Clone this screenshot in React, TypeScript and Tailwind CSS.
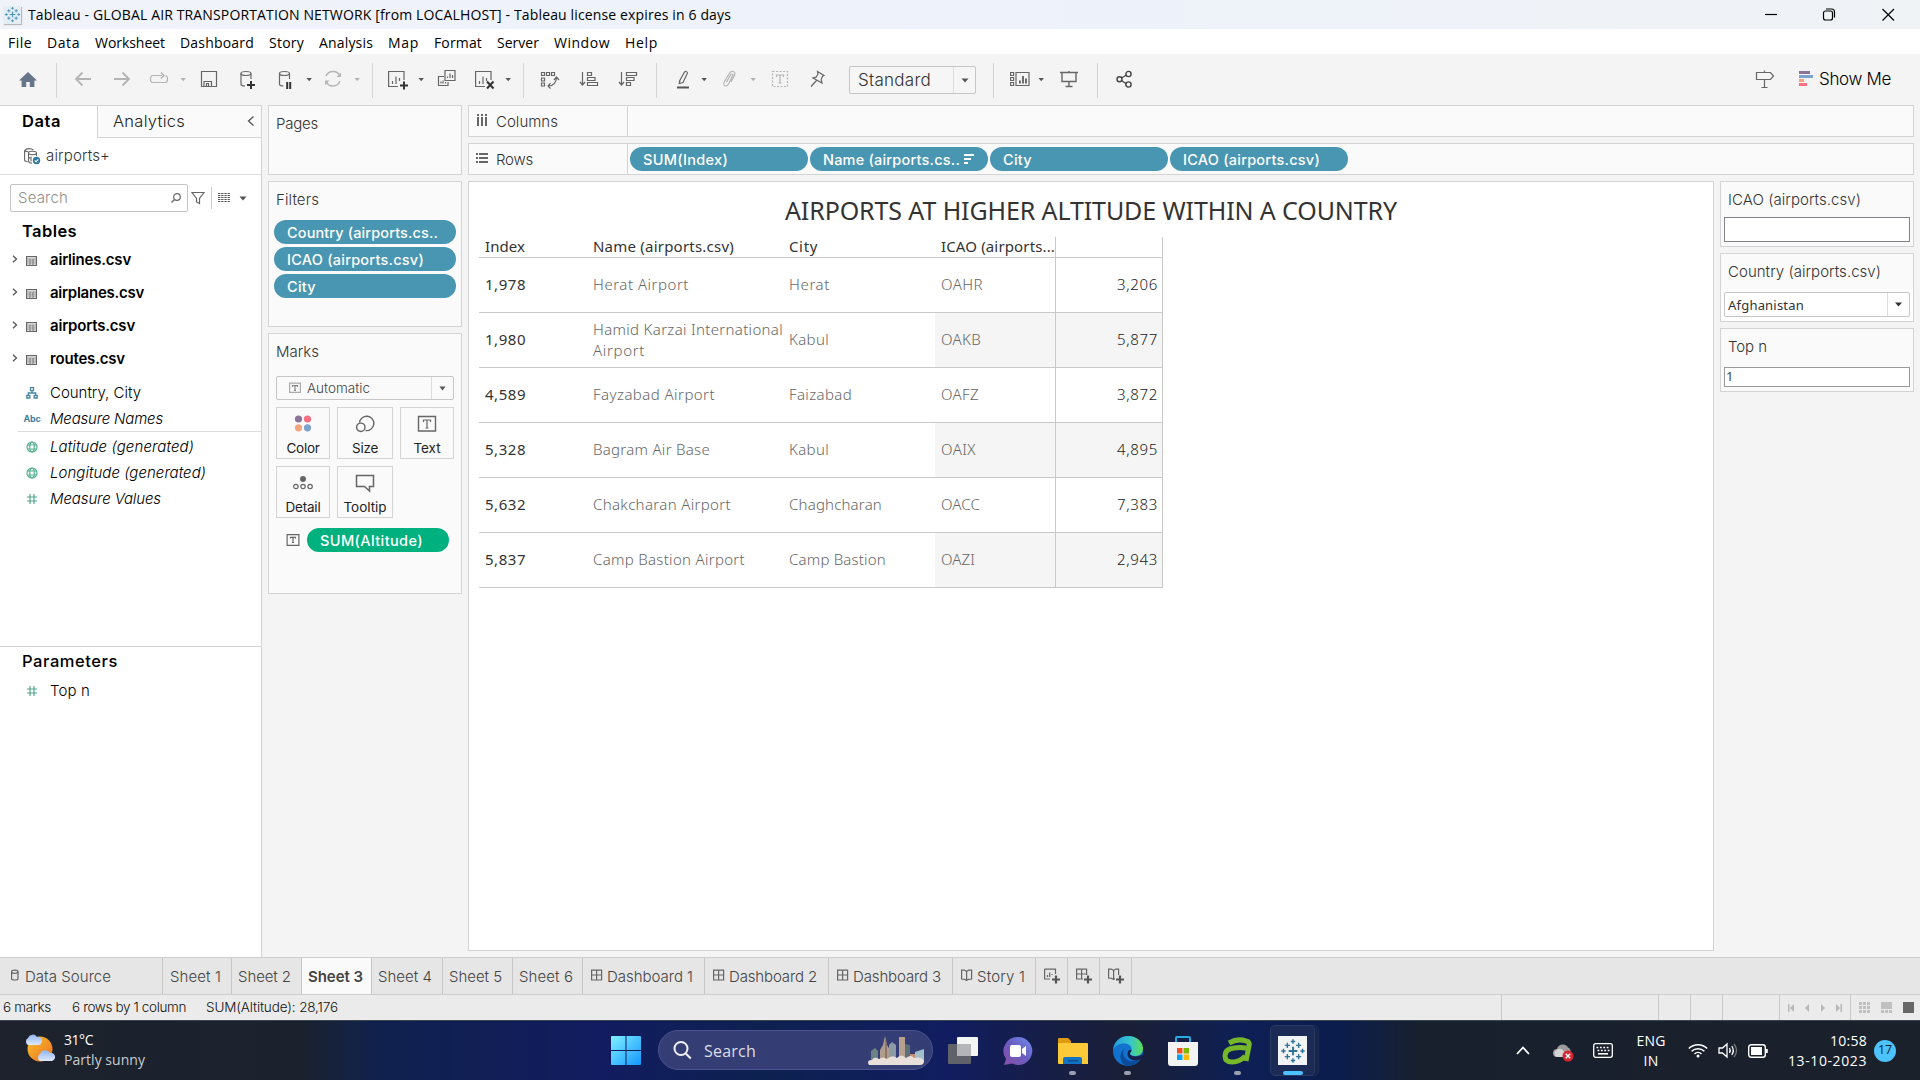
import React, { useLayoutEffect, useRef, useState } from "react";

const UI = "font-[Inter,sans-serif]";
const SYS = "font-['Open_Sans',sans-serif]";

/* A single line of text whose letters are spread evenly over `w` pixels. */
function T({ w, c = "", children }: { w: number; c?: string; children: string }) {
  const ref = useRef<HTMLSpanElement>(null);
  const [gap, setGap] = useState<number | null>(null);
  useLayoutEffect(() => {
    const el = ref.current;
    if (el && gap === null) {
      setGap((w + 1 - el.getBoundingClientRect().width) / children.length);
    }
  }, [gap, w, children]);
  return (
    <span ref={ref} className={`inline-block shrink-0 whitespace-pre ${c}`} style={{ letterSpacing: gap ?? 0 }}>
      {children}
    </span>
  );
}

type IconProps = { c?: string; children: React.ReactNode; w?: number; h?: number };
function Icon({ c = "", children, w = 20, h = 20 }: IconProps) {
  return (
    <svg width={w} height={h} viewBox={`0 0 ${w} ${h}`} fill="none" stroke="#666" strokeWidth="1.2" className={`shrink-0 ${c}`}>
      {children}
    </svg>
  );
}

function Tri({ c = "", light = false }: { c?: string; light?: boolean }) {
  return (
    <svg width="8" height="20" viewBox="0 0 8 20" className={`shrink-0 ${c}`}>
      <path d="M1.5 8h5.4L4.2 11.2z" fill={light ? "#b4b4b4" : "#555"} />
    </svg>
  );
}

function Sep({ c = "" }: { c?: string }) {
  return <div className={`-mt-[7px] h-[35px] w-px shrink-0 bg-[#d4d4d4] ${c}`} />;
}

const plus = <path d="M12 15.5h8M16 11.5v8" stroke="#333" strokeWidth="2" />;

function Toolbar() {
  return (
    <div className="flex h-[51px] items-start bg-[#f4f4f4] pt-4">
      <Icon c="ml-[18px]">
        <path d="M10 2 1 10.5h2.6V17h4.6v-5h3.6v5h4.6v-6.500H19z" fill="#66758a" stroke="none" />
      </Icon>
      <Sep c="ml-[18px]" />
      <Icon c="ml-4"><path d="M18 9H3M9.500 2.500 3 9l6.500 6.500" stroke="#b4b4b4" strokeWidth="1.800" /></Icon>
      <Icon c="ml-[19px]"><path d="M2 9h15M10.500 2.500 17 9l-6.500 6.500" stroke="#b4b4b4" strokeWidth="1.800" /></Icon>
      <Icon c="ml-[17px]">
        <path d="M13 5.500H4Q1.500 5.500 1.500 9T4 12.500h12.500Q18.500 12.500 18.500 9T16.500 6" stroke="#b4b4b4" />
        <path d="m12 2.500 3 3-3 3" stroke="#b4b4b4" strokeWidth="1.500" />
      </Icon>
      <Tri c="ml-[10px]" light />
      <Icon c="ml-3">
        <path d="M2.500 1.500h15v15h-15zM5 16.500v-5h7.500v5M7.500 16.500v-3h2v3" />
      </Icon>
      <Icon c="ml-[19px]">
        <ellipse cx="8" cy="3.500" rx="5" ry="2" /><path d="M3 3.500v10.500q0 2 4 2M13 3.500V9" />
        <path d="M9 15h8M13 11v8" stroke="#333" strokeWidth="2" />
      </Icon>
      <Icon c="ml-[18px]">
        <ellipse cx="8.500" cy="3.500" rx="5" ry="2" /><path d="M3.500 3.500v10.500q0 2 4 2M13.500 3.500V9" />
        <path d="M11.200 12v7M14.200 12v7" stroke="#333" strokeWidth="2" />
      </Icon>
      <Tri c="ml-[9px]" />
      <Icon c="ml-[10px]">
        <path d="M3 6Q5 1.500 10 1.500T16.500 5.500M17 11q-2 5-7 5T3.500 12" stroke="#b4b4b4" strokeWidth="1.400" />
        <path d="M18 2.500V7h-4.500zM2 15v-4.500h4.500z" fill="#b4b4b4" stroke="none" />
      </Icon>
      <Tri c="ml-[10px]" light />
      <Sep c="ml-[11px]" />
      <Icon c="ml-[15px]">
        <path d="M10 16.500H.600V1.500h15.400V10M4.500 14v-3M8 14V6.500M11.500 11V8" />
        {plus}
      </Icon>
      <Tri c="ml-[9px]" />
      <Icon c="ml-3">
        <path d="M8 .500h10v10H8zM7 6.500H1.500v9h9.500V12M10.500 8V6.500M13 8V3.500M15.500 8V5M4 13.500v-2M6 13.500v-3M8.500 13.500v-1.500" />
      </Icon>
      <Icon c="ml-[18px]">
        <path d="M10 16.500H.600V1.500h15.400V10M4.500 14v-3M8 14V6.500M11.500 11V8" />
        <path d="m12 11.500 6.500 7M18.500 11.500l-6.500 7" stroke="#333" strokeWidth="2" />
      </Icon>
      <Tri c="ml-[9px]" />
      <Sep c="ml-[11px]" />
      <Icon c="ml-4">
        <path d="M1.500 2.500h3v3h-3zM6.500 2.500h3v3h-3zM11.500 2.500h3v3h-3zM1.500 8h3v3h-3zM1.500 13h3v3h-3z" />
        <path d="M8 16q8 0 8.500-8.500M10.500 13.200 8 16l2.500 2.500M14 10l2.500-3 2.500 3" />
      </Icon>
      <Icon c="ml-[19px]">
        <path d="M3.500 2v12M1 12l2.500 3L6 12M8.500 2.500h4v3h-4zM8.500 7.500H16v3H8.500zM8.500 12.500h10v3h-10z" />
      </Icon>
      <Icon c="ml-[19px]">
        <path d="M3.500 2v12M1 12l2.500 3L6 12M8.500 2.500h10v3h-10zM8.500 7.500H16v3H8.500zM8.500 12.500h4v3h-4z" />
      </Icon>
      <Sep c="ml-[18px]" />
      <Icon c="ml-4">
        <path d="m6.500 11 5-9q2-1.500 3 1l-4.500 9.500-3.500 1zM6 14l1-3.500" />
        <path d="M4 17.500h12" stroke="#555" strokeWidth="2" />
      </Icon>
      <Tri c="ml-[7px]" />
      <Icon c="ml-[11px]">
        <path d="m7.500 12 4-7q1.500-2 2.500 0l-4.500 9q-2.500 3.500-4.500 1-.8-1.500.5-3.500L11 2.500q2.500-2.500 4.500 0 .8 1.500 0 3L12 12" stroke="#b4b4b4" />
      </Icon>
      <Tri c="ml-[10px]" light />
      <Icon c="ml-[13px]">
        <path d="M2.500 1.500h15v15h-15z" stroke="#b4b4b4" strokeDasharray="2 1.500" />
        <path d="M6.500 7V5h7v2M10 5v8M8.500 13h3" stroke="#b4b4b4" />
      </Icon>
      <Icon c="ml-[18px]">
        <path d="m9.500 1.500 6.500 4-1.500.8-1.300 3.200.8 3.500L5 8l3-.8 2-3.200zM8.500 10.500 3 16.500" />
      </Icon>
      <div className={`-mt-1 ml-[21px] flex h-[28px] w-[127px] shrink-0 items-center rounded-[2px] border border-[#c6c6c6] bg-[#f6f6f6] ${UI}`}>
        <div className="flex w-[103px] pl-2 pt-px"><T w={72} c="text-[17px] font-light text-[#333]">Standard</T></div>
        <div className="flex h-full items-center border-l border-[#ddd] pl-[7px]">
          <svg width="8" height="5"><path d="M.500.500h7L4 4.500z" fill="#555" /></svg>
        </div>
      </div>
      <Sep c="ml-[17px]" />
      <Icon c="ml-4">
        <path d="M.600 2.500h3v3h-3zM.600 7.500h3v3h-3zM.600 12.500h3v3h-3zM6 2.500h13v13H6z" />
        <path d="M10 13.500v-3M13 13.500V6M16 13.500V8.500" strokeWidth="1.900" />
      </Icon>
      <Tri c="ml-[7px]" />
      <Icon c="ml-[14px]">
        <path d="M1 2.500h18M3 2.500v9h14v-9M10 11.500v5M6.500 16.500h7M10 1v1" strokeWidth="1.400" />
      </Icon>
      <Sep c="ml-[18px]" />
      <Icon c="ml-[17px]">
        <path d="m6.500 8 5-3M6.500 10.500l5 3.500" stroke="#444" />
        <g stroke="#444" strokeWidth="1.400"><circle cx="4.500" cy="9.200" r="2.500" /><circle cx="13.500" cy="4" r="2.600" /><circle cx="13.500" cy="14.500" r="2.600" /></g>
      </Icon>
      <Icon c="ml-auto">
        <path d="M1.500 2.500h14L18.500 6l-3 3.500h-14zM9.500.500v2M9.500 9.500v8M6.500 17.500h6" />
      </Icon>
      <Icon c="ml-6" w={14}>
        <g stroke="none"><path d="M0 1h11v3H0z" fill="#8c7399" /><path d="M0 5h14v3H0z" fill="#7ea2cc" /><path d="M0 9h5v3H0z" fill="#f2a57c" /><path d="M0 13h8v3H0z" fill="#fa6f82" /></g>
      </Icon>
      <div className={`-mt-[7px] ml-1.5 flex h-[34px] w-[101px] shrink-0 items-center ${UI}`}>
        <T w={71} c="text-[17px] font-light text-black">Show Me</T>
      </div>
    </div>
  );
}

function TableauMark({ s, color = "#2f7396" }: { s: number; color?: string }) {
  return (
    <svg width={s} height={s} viewBox="0 0 30 30" fill="none" stroke={color} strokeWidth="1.600">
      <path d="M15 10v10M10 15h10" strokeWidth="2.200" />
      <path d="M15 1.500v5M12.500 4h5M15 23.500v5M12.500 26h5M4 12.500v5M1.500 15h5M26 12.500v5M23.500 15h5" />
      <path d="M8.500 5.500v6M5.500 8.500h6M21.500 5.500v6M18.500 8.500h6M8.500 18.500v6M5.500 21.500h6M21.500 18.500v6M18.500 21.500h6" />
    </svg>
  );
}

function TitleBar() {
  return (
    <div className="flex h-[29px] items-center bg-linear-to-r from-[#f1f3fa] via-[#edf2fb] to-[#eff3f6] pl-[3px]">
      <div className="mr-[7px] flex size-[18px] items-center justify-center bg-[#e4eef4] shadow-[1px_1px_1px_#bbb]">
        <TableauMark s={17} color="#4a93bb" />
      </div>
      <T w={702} c={`text-[14px] text-black ${SYS}`}>Tableau - GLOBAL AIR TRANSPORTATION NETWORK [from LOCALHOST] - Tableau license expires in 6 days</T>
      <svg width="140" height="20" viewBox="0 0 140 20" className="ml-auto mr-[21px]" fill="none" stroke="#000" strokeWidth="1.200">
        <path d="M6 9.500h12" />
        <rect x="64.500" y="6" width="9" height="9" rx="2" />
        <path d="M67 4h5.500q3 0 3 3v5.500" />
        <path d="m123.500 4 11.500 11.500M135 4l-11.500 11.500" />
      </svg>
    </div>
  );
}

const menus: [string, number][] = [
  ["File", 23], ["Data", 32], ["Worksheet", 69], ["Dashboard", 73], ["Story", 34], ["Analysis", 53],
  ["Map", 30], ["Format", 47], ["Server", 41], ["Window", 55], ["Help", 32],
];

function Glyph({ kind }: { kind: string }) {
  if (kind === "geo")
    return <Icon w={12} h={12}><g stroke="#54b18d"><circle cx="6" cy="6" r="5" /><ellipse cx="6" cy="6" rx="2.300" ry="5" /><path d="M1.500 4h9M1.500 8h9" /></g></Icon>;
  if (kind === "hash")
    return <Icon w={12} h={12}><path d="M4 1v10M8 1v10M1 4h10M1 8h10" stroke="#54a88a" /></Icon>;
  if (kind === "tree")
    return <Icon w={12} h={12}><path d="M4.500.600h3v3h-3zM.800 8.500h3v2.500h-3zM8.200 8.500h3v2.500h-3zM6 3.600V6M2.300 8.500V6h7.400v2.500" stroke="#4a86a3" strokeWidth="1.300" /></Icon>;
  return <T w={16} c="text-[9px] font-bold text-[#4580a0]">Abc</T>;
}

function Field({ kind, w, italic, children, c = "" }: { kind: string; w: number; italic?: boolean; children: string; c?: string }) {
  return (
    <div className={`flex h-[26px] shrink-0 items-center ${c}`}>
      <div className="flex w-[50px] shrink-0 justify-center pl-[14px]"><Glyph kind={kind} /></div>
      <T w={w} c={italic ? "text-[15px] font-light italic text-black" : "text-[15px] font-light text-black"}>{children}</T>
    </div>
  );
}

const tables: [string, number][] = [["airlines.csv", 80], ["airplanes.csv", 93], ["airports.csv", 84], ["routes.csv", 74]];

function DataPane() {
  return (
    <div className={`flex w-[262px] shrink-0 flex-col border-r border-t border-[#d4d4d4] bg-white ${UI}`}>
      <div className="flex h-8 shrink-0">
        <div className="flex w-[97px] items-center pb-[2px] pl-[22px]"><T w={38} c="text-[16.500px] font-semibold text-black">Data</T></div>
        <div className="flex flex-1 items-center border-b border-l border-[#d4d4d4] bg-[#fafafa] pl-[15px]">
          <T w={71} c="text-[16.500px] font-light text-[#222]">Analytics</T>
          <svg width="8" height="12" viewBox="0 0 8 12" className="ml-auto mr-[6px] -mt-0.5"><path d="M6.500 1.500 1.500 6l5 4.500" fill="none" stroke="#555" strokeWidth="1.300" /></svg>
        </div>
      </div>
      <div className="flex h-[37px] shrink-0 items-center border-b border-[#e0e0e0] pl-6">
        <svg width="17" height="17" viewBox="0 0 17 17" fill="none" stroke="#666" strokeWidth="1.100">
          <path d="M.600 2.500v9.500q0 1.500 3 1.800M.600 2.500Q2 .600 5 .600t4.500 1.500M.600 2.500Q2 4 4.500 3.800" />
          <ellipse cx="8.500" cy="5" rx="4" ry="1.700" /><path d="M4.500 5v8q0 2 3.500 2.300M12.500 5v3M4.500 9q1 1.500 3 1.500M7 8.500v5" />
          <circle cx="12.500" cy="12.500" r="3.700" fill="#2f7a9f" stroke="none" /><path d="m10.700 12.500 1.300 1.300 2.300-2.500" stroke="#fff" />
        </svg>
        <T w={63} c="ml-[5px] text-[15px] font-light text-[#333]">airports+</T>
      </div>
      <div className="flex h-[46px] shrink-0 items-center pl-[10px]">
        <div className="flex h-7 w-[178px] items-center rounded-[2px] border border-[#c4c4c4] pl-[7px]">
          <T w={49} c="text-[15px] font-light text-[#8f8f8f]">Search</T>
          <Icon w={10} h={10} c="ml-auto mr-[6px]"><circle cx="6" cy="4" r="3.300" /><path d="M3.500 6.500.500 9.500" /></Icon>
        </div>
        <Icon w={14} h={14} c="ml-[3px]"><path d="M1 1.500h12L8.500 7.500v5L5.500 11V7.500z" /></Icon>
        <div className="ml-[6px] h-[22px] w-px bg-[#ccc]" />
        <Icon w={12} h={10} c="ml-[6px]"><path d="M0 .500h12M0 2.500h12M0 4.500h12M0 6.500h12M0 8.500h12" stroke="#555" strokeWidth="1" strokeDasharray="2.300 .9" /></Icon>
        <svg width="8" height="5" className="ml-[9px]"><path d="M.500.500h7L4 4.500z" fill="#555" /></svg>
      </div>
      <div className="mb-[3px] flex h-[20px] shrink-0 items-center pl-[22px]"><T w={54} c="text-[16.500px] font-semibold text-black">Tables</T></div>
      {tables.map(([n, w]) => (
        <div key={n} className="flex h-[33px] shrink-0 items-center pl-[12px]">
          <svg width="6" height="8" viewBox="0 0 6 8" className="-mt-1"><path d="m1 .800 3.500 3.200L1 7.200" fill="none" stroke="#555" strokeWidth="1.300" /></svg>
          <Icon w={11} h={10} c="ml-[8px] mr-[13px]"><path d="M.500.600h10v8.800H.500z" /><path d="M.500 3h10M.500 5h10M.500 7h10M4 3v6M7 3v6" strokeWidth=".8" /></Icon>
          <T w={w} c="text-[15px] font-semibold text-black">{n}</T>
        </div>
      ))}
      <Field kind="tree" w={90} c="mt-1">Country, City</Field>
      <Field kind="abc" w={112} italic>Measure Names</Field>
      <div className="-mt-px ml-[18px] h-px shrink-0 bg-[#dcdcdc]" />
      <Field kind="geo" w={143} italic c="mt-[2px]">Latitude (generated)</Field>
      <Field kind="geo" w={155} italic>Longitude (generated)</Field>
      <Field kind="hash" w={110} italic>Measure Values</Field>
      <div className="mt-auto h-[311px] border-t border-[#d4d4d4] pt-1">
        <div className="flex h-5 items-center pl-[22px]"><T w={95} c="text-[16.500px] font-medium text-black">Parameters</T></div>
        <Field kind="hash" w={39} c="mt-[7px]">Top n</Field>
      </div>
    </div>
  );
}

function Pill({ w, children, c = "", sort = false }: { w: number; children: string; c?: string; sort?: boolean }) {
  return (
    <div className={`flex h-6 shrink-0 items-center rounded-full pl-[13px] pt-px ${c}`}>
      <T w={w} c="text-[14.500px] font-medium text-white">{children}</T>
      {sort && <svg width="11" height="11" className="-mt-px ml-1" fill="#fff"><path d="M0 0h10v2H0zM0 4h7v2H0zM0 8h4v2H0z" /></svg>}
    </div>
  );
}

const label = "text-[15px] font-light text-[#333]";
const card = "border border-[#d4d4d4] bg-[#fafafa]";

function MarkButton({ w, text, c, children }: { w: number; text: string; c: string; children: React.ReactNode }) {
  return (
    <div className={`flex h-[52px] flex-col items-center border border-[#d4d4d4] bg-[#fafafa] pt-[6px] ${c}`}>
      <Icon h={20}>{children}</Icon>
      <div className="mt-1 flex h-5 items-center"><T w={w} c="text-[13.500px] text-[#222]">{text}</T></div>
    </div>
  );
}

function CardColumn() {
  return (
    <div className={`ml-[6px] flex w-[194px] shrink-0 flex-col gap-[6px] ${UI}`}>
      <div className={`h-[70px] pl-[7px] pt-[5px] ${card}`}><div className="flex h-[26px] items-center"><T w={41} c={label}>Pages</T></div></div>
      <div className={`h-[146px] pt-[5px] ${card}`}>
        <div className="flex h-[26px] items-center pl-[7px]"><T w={42} c={label}>Filters</T></div>
        <div className="mt-[7px] flex flex-col gap-[3px] pl-[5px]">
          <Pill w={150} c="w-[182px] bg-[#4996b2]">Country (airports.cs..</Pill>
          <Pill w={136} c="w-[182px] bg-[#4996b2]">ICAO (airports.csv)</Pill>
          <Pill w={28} c="w-[182px] bg-[#4996b2]">City</Pill>
        </div>
      </div>
      <div className={`h-[261px] pl-[7px] pt-[5px] ${card}`}>
        <div className="mb-[11px] flex h-[26px] items-center"><T w={42} c={label}>Marks</T></div>
        <div className="flex h-6 w-[178px] items-center rounded-[2px] border border-[#c6c6c6]">
          <Icon w={12} h={12} c="ml-3"><path d="M.600 1.100h10.800v9.300H.600z" stroke="#aaa" /><path d="M3.500 5V3.600h5V5M6 3.600v4.800M5 8.400h2" stroke="#888" /></Icon>
          <div className="ml-[6px] flex w-[124px]"><T w={62} c="text-[13.500px] font-light text-[#444]">Automatic</T></div>
          <div className="flex h-full items-center border-l border-[#ddd] pl-[7px]"><svg width="7" height="5"><path d="M.500.500h6L3.500 4.500z" fill="#555" /></svg></div>
        </div>
        <div className="mt-[7px] flex gap-[7px]">
          <MarkButton w={32} text="Color" c="w-[54px]">
            <g stroke="none"><circle cx="5.500" cy="5" r="3.600" fill="#8c7399" /><circle cx="14.500" cy="5" r="3.600" fill="#fa6f82" /><circle cx="5.500" cy="13.800" r="3.600" fill="#f2a57c" /><circle cx="14.500" cy="13.800" r="3.600" fill="#7ea2cc" /></g>
          </MarkButton>
          <MarkButton w={25} text="Size" c="w-[56px]"><g strokeWidth="1.400"><path d="M4.500 8.500a7.200 7.200 0 1 1 6 8" /><circle cx="5.800" cy="13.300" r="4.200" /></g></MarkButton>
          <MarkButton w={26} text="Text" c="w-[54px]"><path d="M1.500 2.500h17v14.500h-17z" strokeWidth="1.400" /><path d="M6.500 8V6h7v2M10 6v8M8.500 14h3" /></MarkButton>
        </div>
        <div className="mt-[7px] flex gap-[7px]">
          <MarkButton w={34} text="Detail" c="w-[54px]"><circle cx="10" cy="6" r="3" fill="#666" stroke="none" /><circle cx="2.900" cy="13.500" r="2.200" /><circle cx="10" cy="13.500" r="2.200" /><circle cx="17.100" cy="13.500" r="2.200" /></MarkButton>
          <MarkButton w={42} text="Tooltip" c="w-[56px]"><path d="M1.500 2.500h17v11h-4V18l-5-4.500h-8z" strokeWidth="1.500" /></MarkButton>
        </div>
        <div className="mt-[10px] flex items-center">
          <Icon w={14} h={14} c="ml-[10px]"><path d="M1.100 1.600h11.800v10.800H1.100z" /><path d="M4.500 5.500V4.400h5v1.100M7 4.400v5M6 9.500h2" /></Icon>
          <Pill w={102} c="ml-[7px] w-[142px] bg-[#00b180]">SUM(Altitude)</Pill>
        </div>
      </div>
    </div>
  );
}

const rows: { i: string; n: [string, number][]; city: [string, number]; icao: [string, number]; v: string }[] = [
  { i: "1,978", n: [["Herat Airport", 95]], city: ["Herat", 40], icao: ["OAHR", 41], v: "3,206" },
  { i: "1,980", n: [["Hamid Karzai International", 189], ["Airport", 51]], city: ["Kabul", 39], icao: ["OAKB", 39], v: "5,877" },
  { i: "4,589", n: [["Fayzabad Airport", 121]], city: ["Faizabad", 62], icao: ["OAFZ", 37], v: "3,872" },
  { i: "5,328", n: [["Bagram Air Base", 116]], city: ["Kabul", 39], icao: ["OAIX", 34], v: "4,895" },
  { i: "5,632", n: [["Chakcharan Airport", 137]], city: ["Chaghcharan", 92], icao: ["OACC", 38], v: "7,383" },
  { i: "5,837", n: [["Camp Bastion Airport", 151]], city: ["Camp Bastion", 96], icao: ["OAZI", 33], v: "2,943" },
];
const cols = "grid grid-cols-[108px_196px_152px_121px_107px]";
const head = "text-[15px] text-[#333]";
const cell = "text-[15px] font-light text-[#666]";

function Sheet() {
  return (
    <div className="w-[1246px] shrink-0 border border-[#d4d4d4] bg-white font-['Noto_Sans',sans-serif]">
      <div className="flex h-[55px] justify-center pt-[10px]"><T w={611} c="text-[25px] leading-[36px] text-[#333]">AIRPORTS AT HIGHER ALTITUDE WITHIN A COUNTRY</T></div>
      <div className="ml-[10px] w-[684px]">
        <div className={`h-[21px] border-b border-[#c9c9c9] leading-[18px] ${cols}`}>
          <div className="pl-[6px]"><T w={39} c={head}>Index</T></div>
          <div className="pl-[6px]"><T w={140} c={head}>Name (airports.csv)</T></div>
          <div className="pl-[6px]"><T w={28} c={head}>City</T></div>
          <div className="border-r border-[#c9c9c9] pl-[6px]"><T w={113} c={head}>ICAO (airports...</T></div>
          <div className="border-r border-[#c9c9c9]" />
        </div>
        {rows.map((r, k) => (
          <div key={r.i} className={`h-[55px] border-b border-[#c9c9c9] leading-[21px] ${cols}`}>
            <div className="flex items-center pb-[2px] pl-[6px]"><T w={40} c={head}>{r.i}</T></div>
            <div className={`flex flex-col items-start justify-center pl-[6px] ${r.n.length === 1 ? "pb-[2px]" : ""}`}>{r.n.map(([t, w]) => <T key={t} w={w} c={cell}>{t}</T>)}</div>
            <div className="flex items-center pb-[2px] pl-[6px]"><T w={r.city[1]} c={cell}>{r.city[0]}</T></div>
            <div className={`flex items-center border-r border-[#c9c9c9] pb-[2px] pl-[6px] ${k % 2 ? "bg-[#f5f5f5]" : ""}`}><T w={r.icao[1]} c={cell}>{r.icao[0]}</T></div>
            <div className={`flex items-center justify-end border-r border-[#c9c9c9] pb-[2px] pr-1 ${k % 2 ? "bg-[#f5f5f5]" : ""}`}><T w={40} c="text-[15px] font-light text-[#222]">{r.v}</T></div>
          </div>
        ))}
      </div>
    </div>
  );
}

function Shelf({ icon, w, text, children }: { icon: React.ReactNode; w: number; text: string; children?: React.ReactNode }) {
  return (
    <div className={`flex h-8 w-[1446px] shrink-0 ${card}`}>
      <div className="flex w-[159px] items-center border-r border-[#d4d4d4] pl-[7px]">
        {icon}
        <T w={w} c={`ml-2 mt-[2px] ${label}`}>{text}</T>
      </div>
      <div className="flex items-center gap-[2px] pl-[2px]">{children}</div>
    </div>
  );
}

function Workspace() {
  return (
    <div className={`ml-[6px] flex w-[1446px] shrink-0 flex-col gap-[6px] ${UI}`}>
      <Shelf w={61} text="Columns" icon={<svg width="12" height="12" className="-mt-[2px]" fill="#666"><path d="M1 0h2v2H1zM5 0h2v2H5zM9 0h2v2H9zM1 3h2v9H1zM5 3h2v9H5zM9 3h2v9H9z" /></svg>} />
      <Shelf w={36} text="Rows" icon={<svg width="12" height="10" className="-mt-[2px]" fill="#666"><path d="M0 0h2v2H0zM0 4h2v2H0zM0 8h2v2H0zM3 0h9v2H3zM3 4h9v2H3zM3 8h9v2H3z" /></svg>}>
        <Pill w={84} c="w-[178px] bg-[#4996b2]">SUM(Index)</Pill>
        <Pill w={136} sort c="w-[178px] bg-[#4996b2]">Name (airports.cs..</Pill>
        <Pill w={28} c="w-[178px] bg-[#4996b2]">City</Pill>
        <Pill w={136} c="w-[178px] bg-[#4996b2]">ICAO (airports.csv)</Pill>
      </Shelf>
      <div className="flex h-[770px] gap-[6px]">
        <Sheet />
        <div className="flex w-[194px] flex-col gap-[6px]">
          <div className={`h-[66px] px-[3px] pt-[5px] ${card}`}>
            <div className="h-[30px] pl-1"><T w={132} c={label}>ICAO (airports.csv)</T></div>
            <div className="h-[25px] border border-[#81818c] bg-white" />
          </div>
          <div className={`h-[69px] ${card}`}>
            <div className="h-[35px] pl-[7px] pt-[5px]"><T w={152} c={label}>Country (airports.csv)</T></div>
            <div className="h-8 bg-white px-[3px] pt-[3px]">
              <div className="flex h-[25px] items-center rounded-[2px] border border-[#c6c6c6] pl-[3px]">
                <div className="flex w-[159px] pt-[2px]"><T w={75} c="font-['Noto_Sans',sans-serif] text-[13px] text-[#333]">Afghanistan</T></div>
                <div className="flex h-full items-center border-l border-[#ddd] pl-[7px]"><svg width="7" height="5"><path d="M0 .500h7L3.500 4.500z" fill="#333" /></svg></div>
              </div>
            </div>
          </div>
          <div className={`h-[64px] px-[3px] pt-[5px] ${card}`}>
            <div className="h-[33px] pl-1"><T w={38} c={label}>Top n</T></div>
            <div className="flex h-5 items-center border border-[#999] bg-white pl-px font-['Noto_Sans',sans-serif] text-[13px] text-[#444]">1</div>
          </div>
        </div>
      </div>
    </div>
  );
}

const gridIcon = <path d="M.600 1.100h10v9.900H.600zM5.600 1.100V11M.600 6h10" />;
const bookIcon = <path d="M.600 1.100 3.500 1 5.600 2.500 7.700 1l2.900.1V10l-3 .3-2 1.200-2-1.200-3-.3zM5.600 2.500v9" />;

function Tab({ c, w, icon, active, children }: { c: string; w: number; icon?: React.ReactNode; active?: boolean; children: string }) {
  return (
    <div className={`flex shrink-0 items-center border-r border-[#c6c6c6] pt-[2px] ${active ? "bg-[#fafafa]" : ""} ${c}`}>
      {icon && <Icon w={12} h={12} c="-mt-1 mr-1">{icon}</Icon>}
      <T w={w} c={active ? "text-[15px] font-semibold text-[#444]" : "text-[15px] font-light text-[#444]"}>{children}</T>
    </div>
  );
}

function SheetTabs() {
  return (
    <div className={`flex h-[38px] border-y border-[#cdcdcd] bg-[#e6e6e6] ${UI}`}>
      <Tab c="w-[163px] pl-[9px]" w={85} icon={<><path d="M2.600 2.700v7q0 1.300 3.200 1.300T9 9.700v-7" /><ellipse cx="5.800" cy="2.700" rx="3.200" ry="1.600" /></>}>Data Source</Tab>
      <Tab c="w-[69px] pl-[7px]" w={50}>Sheet 1</Tab>
      <Tab c="w-[70px] pl-[6px]" w={52}>Sheet 2</Tab>
      <Tab c="w-[70px] pl-[6px]" w={54} active>Sheet 3</Tab>
      <Tab c="w-[71px] pl-[6px]" w={53}>Sheet 4</Tab>
      <Tab c="w-[70px] pl-[6px]" w={52}>Sheet 5</Tab>
      <Tab c="w-[70px] pl-[6px]" w={53}>Sheet 6</Tab>
      <Tab c="w-[122px] pl-2" w={85} icon={gridIcon}>Dashboard 1</Tab>
      <Tab c="w-[124px] pl-2" w={87} icon={gridIcon}>Dashboard 2</Tab>
      <Tab c="w-[124px] pl-2" w={87} icon={gridIcon}>Dashboard 3</Tab>
      <Tab c="w-[83px] pl-2" w={47} icon={bookIcon}>Story 1</Tab>
      {[<path key="a" d="M.600 1.100h10.900V6M.600 1.100v9.900H6M3.500 9V7M5.700 9V4.500M8 9V6" />, gridIcon, bookIcon].map((g, k) => (
        <div key={k} className="flex w-8 justify-center border-r border-[#c6c6c6] pt-[10px]">
          <Icon w={16} h={16}>{g}<path d="M7 7h9v9H7z" fill="#e6e6e6" stroke="none" /><path d="M8 11.500h8M12 7.500v8" stroke="#555" strokeWidth="2.200" /></Icon>
        </div>
      ))}
    </div>
  );
}

function StatusBar() {
  const t = "text-[13.500px] font-light text-[#111]";
  const d = "border-l border-[#c8c8c8]";
  return (
    <div className={`flex h-[25px] items-center bg-[#ebebeb] pl-[3px] ${UI}`}>
      <T w={47} c={t}>6 marks</T>
      <T w={113} c={`ml-[21px] ${t}`}>6 rows by 1 column</T>
      <T w={131} c={`ml-5 ${t}`}>SUM(Altitude): 28,176</T>
      <div className="ml-auto flex h-full">
        <div className={`w-[157px] ${d}`} /><div className={`w-8 ${d}`} /><div className={`w-8 ${d}`} /><div className={`w-[57px] ${d}`} />
        <div className={`flex w-[71px] items-center ${d}`}>
          <svg width="56" height="8" className="ml-2" fill="#b8b8b8"><path d="M0 0h1.500v8H0zM6 0v8L2 4zM21 0v8l-4-4zM33 0v8l4-4zM48 0v8l4-4zM52.500 0H54v8h-1.500z" /></svg>
        </div>
        <div className={`flex w-[70px] items-center ${d}`}>
          <svg width="56" height="11" className="ml-2" fill="#c0c0c0">
            <path d="M0 0h3v3H0zM4 0h3v3H4zM8 0h3v3H8zM0 4h3v3H0zM4 4h3v3H4zM8 4h3v3H8zM0 8h3v3H0zM4 8h3v3H4zM8 8h3v3H8zM22 0h11v7H22zM22 8h3v3h-3zM26 8h3v3h-3zM30 8h3v3h-3z" />
            <path d="M44 0h11v11H44z" fill="#666" />
          </svg>
        </div>
      </div>
    </div>
  );
}

function TaskApp({ children, dot, c = "" }: { children: React.ReactNode; dot?: boolean; c?: string }) {
  return (
    <div className={`flex h-[60px] w-[55px] shrink-0 flex-col items-center pt-[14px] ${c}`}>
      <svg width="32" height="32" viewBox="0 0 32 32">{children}</svg>
      {dot && <div className="mt-[4px] h-1 w-[7px] rounded-full bg-[#9a9eb0]" />}
    </div>
  );
}

function Taskbar() {
  return (
    <div className={`flex h-[60px] border-t border-[#3a4550] bg-[linear-gradient(90deg,#1d222c_0,#1b222e_300px,#10214e_380px,#121c60_600px,#0d2150_760px,#111d60_950px,#161e48_1040px,#1a1f36_1130px,#0d1f55_1240px,#0b1d4c_1340px,#18202e_1420px,#1b212b_1920px)] text-white ${SYS}`}>
      <svg width="34" height="34" viewBox="0 0 34 34" className="ml-[24px] mt-[11px]">
        <defs>
          <linearGradient id="sun" x1="0" y1="0" x2="1" y2="1"><stop offset="0" stopColor="#f6c12e" /><stop offset="1" stopColor="#ee6f1e" /></linearGradient>
          <linearGradient id="cl" x1="0" y1="0" x2="0" y2="1"><stop offset="0" stopColor="#8fb4f2" /><stop offset="1" stopColor="#dfe9fb" /></linearGradient>
        </defs>
        <circle cx="16" cy="17" r="12.500" fill="url(#sun)" />
        <path d="M4 13a4 4 0 0 1 0-7 5 5 0 0 1 9-1 4 4 0 0 1 2 8z" fill="url(#cl)" />
        <path d="M16 29a4 4 0 0 1 0-7 5.500 5.500 0 0 1 10-1 4 4 0 0 1 2 8z" fill="url(#cl)" />
      </svg>
      <div className="ml-[6px] mt-[9px] flex w-[547px] shrink-0 flex-col items-start leading-[20px]">
        <T w={28} c="text-[14px]">31°C</T>
        <T w={80} c="text-[14px] text-[#c8ccd2]">Partly sunny</T>
      </div>
      <svg width="30" height="30" viewBox="0 0 30 30" className="mt-[15px] shrink-0">
        <defs><linearGradient id="win" x1="0" y1="0" x2="1" y2="1"><stop offset="0" stopColor="#7ff0ff" /><stop offset="1" stopColor="#1497ff" /></linearGradient></defs>
        <path d="M1 0h13.500v14H0V1q0-1 1-1zM15.500 0H29q1 0 1 1v13H15.500zM0 15h14.500v14H1q-1 0-1-1zM15.500 15H30v13q0 1-1 1H15.500z" fill="url(#win)" />
      </svg>
      <div className="ml-[17px] mt-[9px] flex h-10 w-[275px] shrink-0 items-center rounded-full border border-[#4b5490] bg-[#353e74] pl-[14px]">
        <svg width="20" height="20" viewBox="0 0 20 20" fill="none" stroke="#f0f1f6" strokeWidth="2"><circle cx="8" cy="8.500" r="6.500" /><path d="m12.800 13.500 5 5" /></svg>
        <T w={51} c="ml-[11px] mt-px text-[16px] text-[#dcdde6]">Search</T>
        <svg width="58" height="32" viewBox="0 0 58 32" className="ml-auto mr-[7px]">
          <path d="M4 28V17l4-3 3 3v11z" fill="#6d8284" /><path d="M13 28V16l3-5 2-9 2 9 3 5v12z" fill="#b09c8c" /><path d="M18 30V4l2 7v19z" fill="#8a7568" />
          <path d="M22 28V11l3-3 4 3v17z" fill="#8b9aa5" /><path d="M32 28V3h6v25z" fill="#b7a08e" /><path d="M38 28V10l5 1v17z" fill="#5d7078" />
          <path d="M43 28v-8h5v8z" fill="#c98c6c" /><path d="M48 28V18l9-3v13z" fill="#9fc0cb" />
          <path d="M2 31q-3-5 3-5 2-4 7-1 4-3 8 0 5-5 10-1 4-5 9 0 5-4 8 0 8-2 10 3 0 4-4 4z" fill="#e8dfda" />
        </svg>
      </div>
      <TaskApp c="ml-[2px]">
        <rect x="10" y="2" width="21" height="19" rx="1" fill="#f4f4f4" /><rect x="1" y="9" width="23" height="20" rx="1" fill="#5f6268" /><path d="M10 9h14v12H10z" fill="#b4b5b8" />
      </TaskApp>
      <TaskApp>
        <defs><linearGradient id="ch" x1="1" y1="0" x2="0" y2="1"><stop offset="0" stopColor="#6f8df0" /><stop offset=".5" stopColor="#6a5cc0" /><stop offset="1" stopColor="#8a4fa8" /></linearGradient></defs>
        <path d="M16 2a14 14 0 1 1-6 26.500L2 30l2-6A14 14 0 0 1 16 2z" fill="url(#ch)" />
        <rect x="8" y="10" width="11" height="12" rx="2" fill="#fff" /><path d="m20 14 4-3v10l-4-3z" fill="#fff" />
      </TaskApp>
      <TaskApp dot>
        <path d="M1 4q0-1 1-1h9l3 3v5H1z" fill="#e09a12" /><path d="M1 8h29q1 0 1 1v20H2q-1 0-1-1z" fill="#fcc938" /><path d="M6 29v-5q0-2 2-2h15q2 0 2 2v5z" fill="#1273c4" /><path d="M11 25h10v1.500H11z" fill="#0a4f90" />
      </TaskApp>
      <TaskApp dot>
        <defs><linearGradient id="ed" x1="0" y1=".4" x2="1" y2=".4"><stop offset="0" stopColor="#1f9be0" /><stop offset=".6" stopColor="#38c6c8" /><stop offset="1" stopColor="#5fdc50" /></linearGradient></defs>
        <circle cx="16" cy="16" r="15" fill="#1272cd" />
        <path d="M1 15C2 6 9 1 16 1c9 0 15 6 15 12.500 0 5-4 7.500-8 7.500-3 0-5-1-5-2.500s2-2 1.500-5C19 10 16 8.500 12 8.500 7 8.500 3 11 1 15z" fill="url(#ed)" />
        <path d="M12 14c-3 6 2 13 9 12 4 0 6-2 7-2-3 5-8 7-12 7-8-1-10-12-4-17z" fill="#0b4b9b" />
        <path d="M19.500 15c0 2-2 3-1.500 4.500 1 2 8 3 12 0L32 21l-4 3.500q-7 2.500-11-1.500-3-4 0-8z" fill="#16204a" />
      </TaskApp>
      <TaskApp>
        <path d="M9 8V3q0-1 1-1h12q1 0 1 1v5" fill="none" stroke="#27a9e1" strokeWidth="2" /><path d="M1 7h30v21q0 3-3 3H4q-3 0-3-3z" fill="#f3f3f3" />
        <path d="M10 13h5.500v5.500H10z" fill="#f25022" /><path d="M16.500 13H22v5.500h-5.500z" fill="#7fba00" /><path d="M10 19.500h5.500V25H10z" fill="#00a4ef" /><path d="M16.500 19.500H22V25h-5.500z" fill="#ffb900" />
      </TaskApp>
      <TaskApp dot>
        <path d="M7 8q9-5 17-2 4 1 3 5l-3 15M24 13q-6-1-12 0-9 1-9 8 0 6 7 6 8 0 13-6" fill="none" stroke="#76b82a" strokeWidth="5" />
      </TaskApp>
      <div className="ml-[5px] mt-1 flex h-[51px] shrink-0 rounded-[5px] border border-[#1e2d58] bg-[#152449] pr-1">
        <div className="-m-px flex h-[51px] w-[45px] flex-col items-center rounded-[5px] border border-[#2b3a64] bg-[#1c2b55] pt-[10px]">
          <div className="flex size-[29px] shrink-0 items-center justify-center bg-[#f2f3f5]"><TableauMark s={26} /></div>
          <div className="mt-[6px] h-1 w-5 shrink-0 rounded-full bg-[#4cc2ff]" />
        </div>
      </div>
      <div className="ml-auto flex items-center">
        <svg width="14" height="9" viewBox="0 0 14 9" className="-ml-px mr-px"><path d="m1 8 6-6.500L13 8" fill="none" stroke="#fff" strokeWidth="1.800" /></svg>
        <svg width="22" height="18" viewBox="0 0 22 18" className="ml-[22px] mt-1"><path d="M4 13a4 4 0 0 1 0-8 6 6 0 0 1 11-1.500q3 1 2.500 5L10 13z" fill="#9b9b9b" /><path d="M4 13a4 4 0 0 1 0-7.500q5-2 7 2V13z" fill="#d5d5d5" /><circle cx="15" cy="12" r="5.500" fill="#d92532" /><path d="m12.800 9.800 4.400 4.400M17.200 9.800l-4.400 4.400" stroke="#fff" strokeWidth="1.500" /></svg>
        <svg width="20" height="15" viewBox="0 0 20 15" className="ml-[18px]" fill="none" stroke="#fff" strokeWidth="1.300"><rect x=".7" y=".7" width="18.600" height="13.600" rx="2" /><path d="M3.500 4.500h13M4.500 7.500h12" strokeWidth="1.600" strokeDasharray="1.800 1.600" /><path d="M5 10.800h10" strokeWidth="1.600" /></svg>
        <div className="ml-6 flex w-[28px] flex-col items-center text-[14px] leading-[20px]"><T w={28}>ENG</T><T w={14}>IN</T></div>
        <svg width="20" height="15" viewBox="0 0 20 15" className="ml-[23px]" fill="none" stroke="#fff" strokeWidth="1.500"><path d="M.800 5.500a13 13 0 0 1 18.400 0M3.600 8.300a9 9 0 0 1 12.800 0M6.500 11a5 5 0 0 1 7 0" /><circle cx="10" cy="13" r="1.500" fill="#fff" stroke="none" /></svg>
        <svg width="20" height="17" viewBox="0 0 20 17" className="ml-[10px]" fill="none" stroke="#fff" strokeWidth="1.300"><path d="M1 6v5h3.500L9 15V2L4.500 6zM11.500 6q1.500 2.500 0 5M13.800 4q3 4.500 0 9" /><path d="M16 2q5 6.500 0 13" stroke="#777" /></svg>
        <svg width="20" height="14" viewBox="0 0 20 14" className="ml-[10px]" fill="none" stroke="#fff" strokeWidth="1.400"><rect x=".7" y=".7" width="16.600" height="12.600" rx="2.500" /><rect x="3" y="3" width="11" height="8" fill="#fff" stroke="none" /><path d="M18.800 5v4" strokeWidth="2" /></svg>
        <div className="ml-[20px] flex w-[79px] flex-col items-end text-[14px] leading-[20px]"><T w={36}>10:58</T><T w={78}>13-10-2023</T></div>
        <div className="ml-[7px] mr-6 flex size-[22px] items-center justify-center rounded-full bg-[#4cc2ff]"><T w={13} c="text-[12.500px] text-[#10202c]">17</T></div>
      </div>
    </div>
  );
}

export default function App() {
  return (
    <div className="flex h-[1080px] w-[1920px] flex-col overflow-hidden bg-[#f4f4f4]">
      <TitleBar />
      <div className={`flex h-[25px] items-center gap-[15px] bg-white pl-2 pt-[2px] ${SYS}`}>
        {menus.map(([m, w]) => <T key={m} w={w} c="text-[14px] text-black">{m}</T>)}
      </div>
      <Toolbar />
      <div className="flex h-[852px] shrink-0">
        <DataPane />
        <CardColumn />
        <Workspace />
      </div>
      <SheetTabs />
      <StatusBar />
      <Taskbar />
    </div>
  );
}
